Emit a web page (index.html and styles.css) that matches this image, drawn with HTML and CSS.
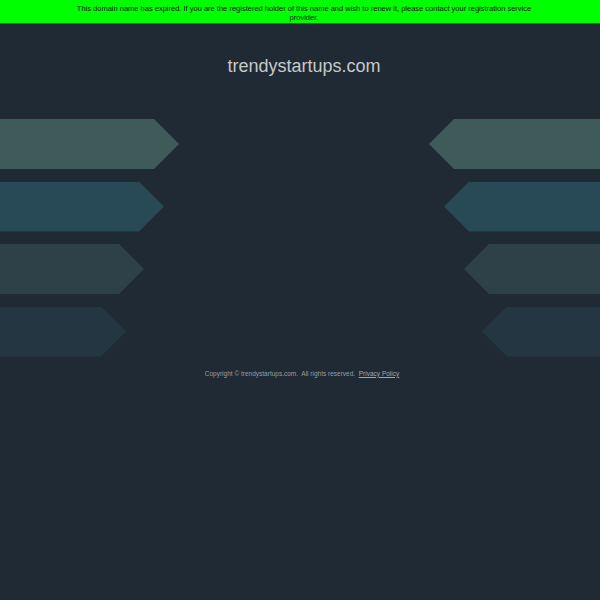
FILE: index.html
```html
<!DOCTYPE html>
<html lang="en">
<head>
<meta charset="utf-8">
<title>trendystartups.com</title>
<link rel="stylesheet" href="styles.css">
</head>
<body>
<div class="banner"><p class="banner-text">This domain name has expired. If you are the registered holder of this name and wish to renew it, please contact your registration service provider.</p></div>
<h1 class="title">trendystartups.com</h1>
<div class="arrows">
  <div class="row"><div class="arrow left a1" style="width:179px"></div><div class="arrow right a1" style="width:171px"></div></div>
  <div class="row"><div class="arrow left a2" style="width:164px"></div><div class="arrow right a2" style="width:156px"></div></div>
  <div class="row"><div class="arrow left a3" style="width:144px"></div><div class="arrow right a3" style="width:136px"></div></div>
  <div class="row"><div class="arrow left a4" style="width:126px"></div><div class="arrow right a4" style="width:118px"></div></div>
</div>
<p class="footer">Copyright © trendystartups.com.&nbsp; All rights reserved.&nbsp; <a class="privacy" href="#">Privacy Policy</a></p>
</body>
</html>
```
FILE: styles.css
```css
html, body {
  margin: 0;
  padding: 0;
  background: #1f2a35;
  font-family: "Liberation Sans", Arial, sans-serif;
}
.banner {
  background: #00ff00;
  border-bottom: 1px solid #1b5e20;
  height: 24px;
  box-sizing: border-box;
  padding: 4px 0 0 8px;
}
.banner-text {
  margin: 0 auto;
  width: 470px;
  font-size: 7.5px;
  line-height: 9px;
  text-align: center;
  color: #111;
}
.title {
  margin: 31px 0 0 0;
  padding-left: 8px;
  font-size: 18px;
  line-height: 22px;
  font-weight: normal;
  text-align: center;
  color: #c9c9c9;
}
.arrows {
  margin-top: 42px;
  display: flex;
  flex-direction: column;
  gap: 12.5px;
}
.row {
  display: flex;
  justify-content: space-between;
  height: 50px;
}
.arrow { height: 50px; }
.left { clip-path: polygon(0 0, calc(100% - 25px) 0, 100% 50%, calc(100% - 25px) 100%, 0 100%); }
.right { clip-path: polygon(25px 0, 100% 0, 100% 100%, 25px 100%, 0 50%); }
.a1 { background: #3e5a59; }
.a2 { background: #284956; }
.a3 { background: #2e4149; }
.a4 { background: #243641; }
.footer {
  margin: 12px 0 0 0;
  padding-left: 4px;
  font-size: 6.5px;
  line-height: 9px;
  text-align: center;
  color: #9a9ea3;
}
.privacy { color: #a3a6aa; text-decoration: underline; }
```
